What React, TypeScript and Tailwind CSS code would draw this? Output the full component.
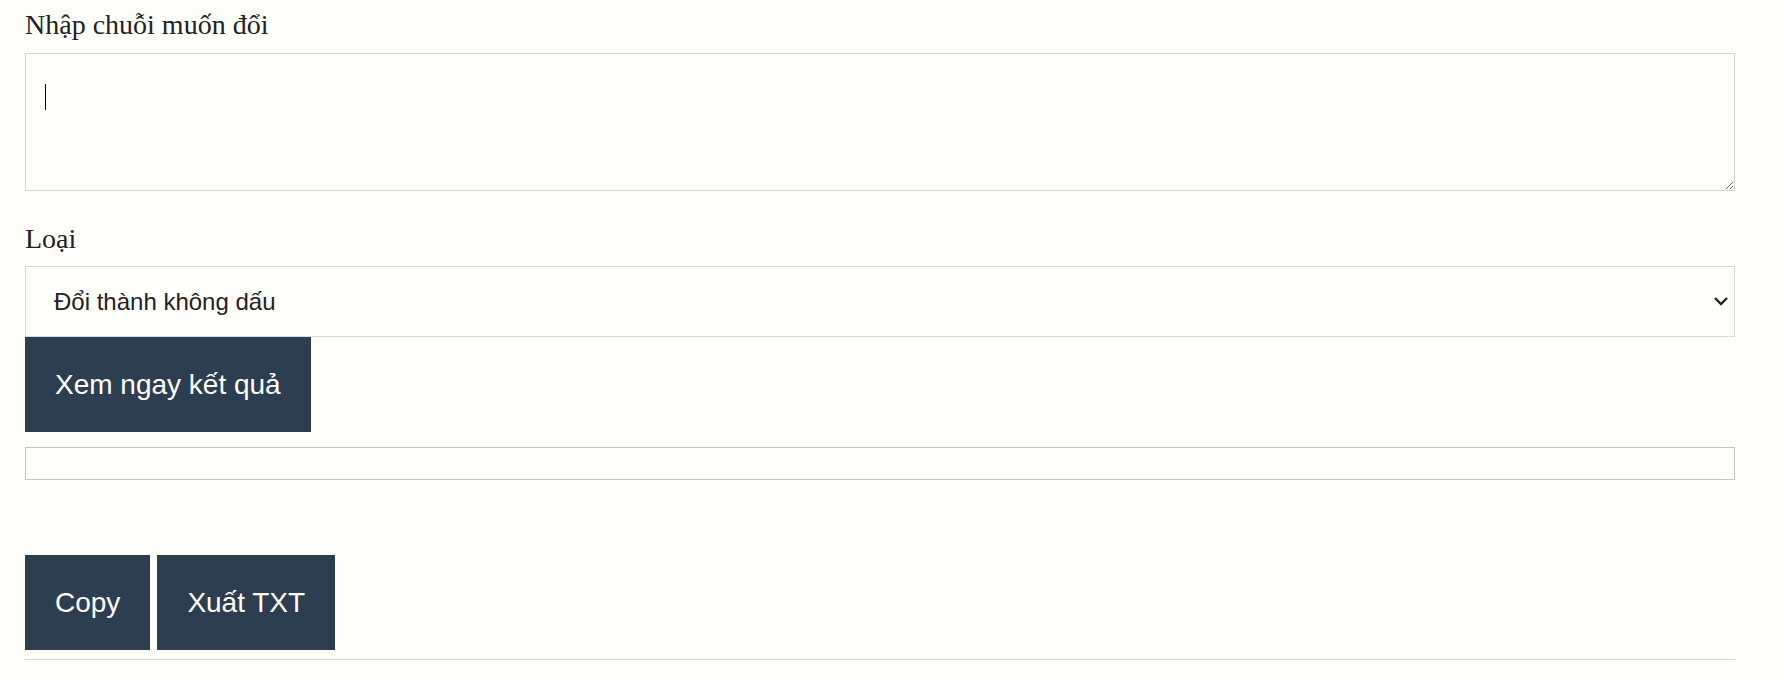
import { useState } from 'react';

const serif = { fontFamily: '"Liberation Serif", "Times New Roman", serif' };

export default function App() {
  const [text, setText] = useState('');
  const [mode, setMode] = useState('khongdau');

  return (
    <div
      className="min-h-screen bg-[#fdfdf9] pl-[25px] pt-[5px] text-[#222]"
      style={{ fontFamily: '"Liberation Sans", Arial, sans-serif' }}
    >
      <div className="w-[1710px]">
        <label className="block text-[28px] leading-[40px] text-[#222]" style={serif}>
          Nhập chuỗi muốn đổi
        </label>
        <div className="relative mt-[8px]">
          <textarea
            value={text}
            onChange={(e) => setText(e.target.value)}
            className="block h-[138px] w-full border border-[#d4d4d4] bg-white/40 px-[20px] py-[28px] text-[24px] leading-[30px] caret-black outline-none"
          />
          {text === '' && (
            <span className="pointer-events-none absolute left-[20px] top-[31px] h-[26px] w-px bg-black" />
          )}
        </div>

        <label className="mt-[28px] block text-[28px] leading-[40px] text-[#222]" style={serif}>
          Loại
        </label>
        <div className="relative mt-[7px]">
          <select
            value={mode}
            onChange={(e) => setMode(e.target.value)}
            className="block h-[71px] w-full appearance-none border border-[#d9d9d9] bg-white/40 pl-[28px] pr-[30px] text-[24px] text-[#222] outline-none"
          >
            <option value="khongdau">Đổi thành không dấu</option>
            <option value="codau">Đổi thành có dấu</option>
          </select>
          <svg
            className="pointer-events-none absolute right-[6px] top-[30px]"
            width="16"
            height="10"
            viewBox="0 0 16 10"
            fill="none"
          >
            <path d="M2 2l6 6 6-6" stroke="#222" strokeWidth="2.4" />
          </svg>
        </div>
        <button className="block h-[95px] bg-[#2c3e50] px-[30px] text-[28px] text-white">
          Xem ngay kết quả
        </button>

        <div className="mt-[15px] h-[33px] w-full border border-[#c4c4c8]" />

        <div className="mt-[75px] flex gap-[7px]">
          <button className="h-[95px] bg-[#2c3e50] px-[30px] text-[28px] text-white">Copy</button>
          <button className="h-[95px] bg-[#2c3e50] px-[30px] text-[28px] text-white">Xuất TXT</button>
        </div>
        <div className="mt-[9px] border-t border-[#d6d6d6]" />
      </div>
    </div>
  );
}
